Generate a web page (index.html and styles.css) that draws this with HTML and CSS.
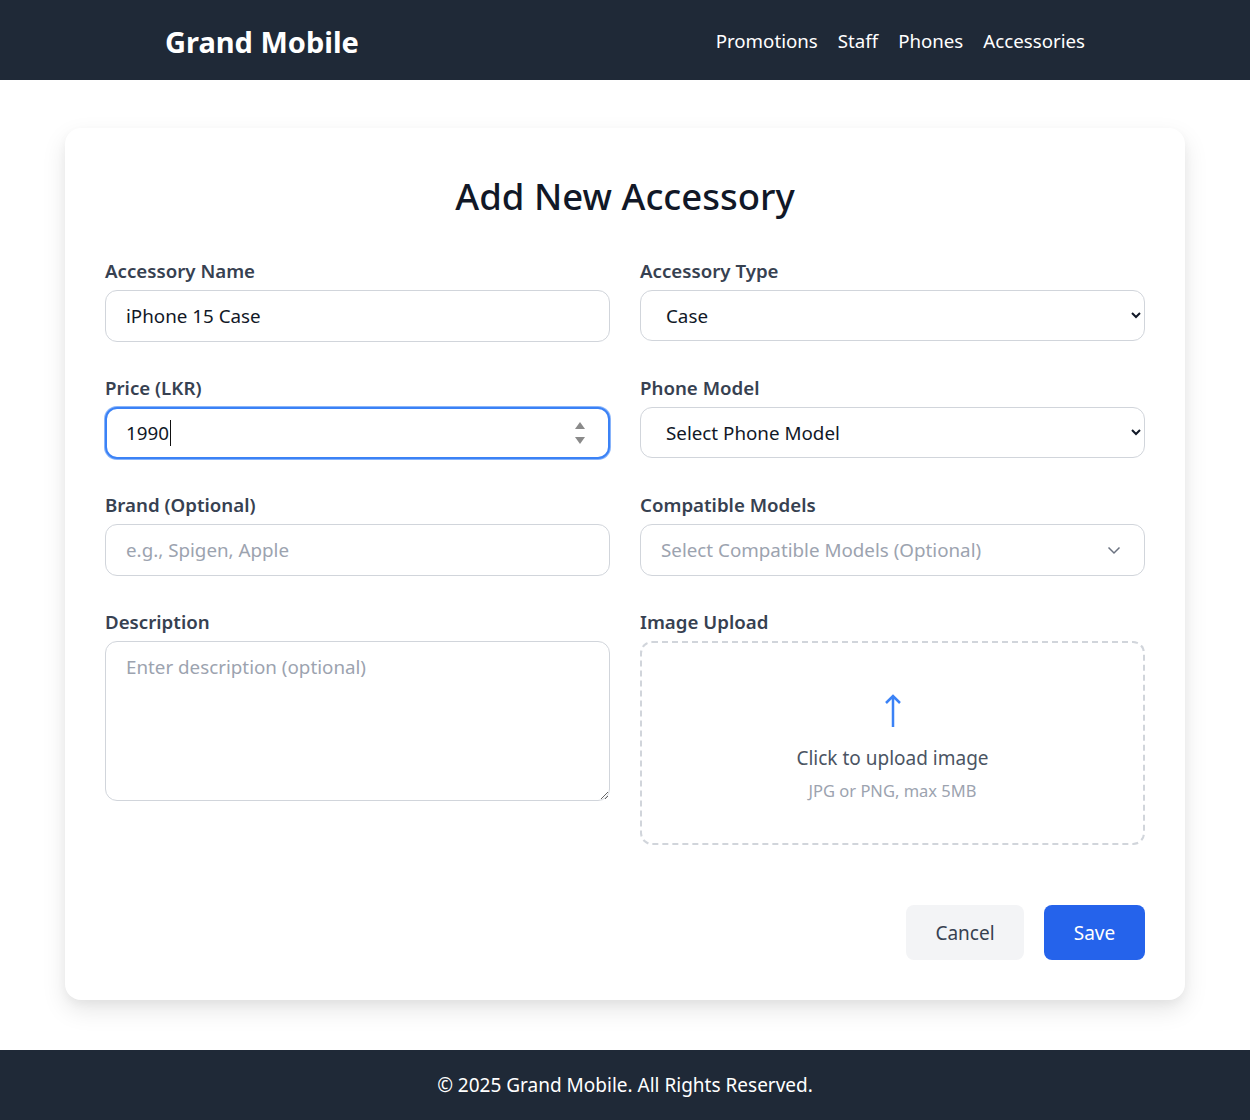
FILE: index.html
```html
<!DOCTYPE html>
<html lang="en">
<head>
    <meta charset="UTF-8">
    <meta name="viewport" content="width=device-width, initial-scale=1.0">
    <title>Add New Accessory - Grand Mobile</title>
    <link rel="stylesheet" href="styles.css">
</head>
<body>
    <!-- Navigation Bar -->
    <nav class="navbar">
        <div class="nav-inner">
            <div class="nav-brand">Grand Mobile</div>
            <ul class="nav-links">
                <li><a href="#">Promotions</a></li>
                <li><a href="#">Staff</a></li>
                <li><a href="#">Phones</a></li>
                <li><a href="#">Accessories</a></li>
            </ul>
        </div>
    </nav>

    <!-- Main Content -->
    <main class="page">
        <form class="form-card">
            <h1 class="form-title">Add New Accessory</h1>

            <div class="form-grid">
                <div class="field">
                    <label for="name">Accessory Name</label>
                    <input type="text" id="name" class="control" value="iPhone 15 Case">
                </div>
                <div class="field">
                    <label for="type">Accessory Type</label>
                    <select id="type" class="control select">
                        <option>Case</option>
                        <option>Charger</option>
                        <option>Screen Protector</option>
                    </select>
                </div>

                <div class="field">
                    <label for="price">Price (LKR)</label>
                    <div class="number-wrap">
                        <input type="text" id="price" class="control focused" value="1990">
                        <span class="caret"></span>
                        <span class="spinner">
                            <svg width="12" height="26" viewBox="0 0 12 26">
                                <path d="M6 2 L11 9 H1 Z" fill="#8a8a8a"/>
                                <path d="M6 24 L11 17 H1 Z" fill="#8a8a8a"/>
                            </svg>
                        </span>
                    </div>
                </div>
                <div class="field">
                    <label for="phone">Phone Model</label>
                    <select id="phone" class="control select">
                        <option>Select Phone Model</option>
                    </select>
                </div>

                <div class="field">
                    <label for="brand">Brand (Optional)</label>
                    <input type="text" id="brand" class="control" placeholder="e.g., Spigen, Apple">
                </div>
                <div class="field">
                    <label>Compatible Models</label>
                    <div class="control multi-select">
                        <span class="placeholder">Select Compatible Models (Optional)</span>
                        <svg width="16" height="16" viewBox="0 0 16 16">
                            <path d="M2.5 5.5 L8 11 L13.5 5.5" fill="none" stroke="#6b7280" stroke-width="1.5"/>
                        </svg>
                    </div>
                </div>

                <div class="field">
                    <label for="desc">Description</label>
                    <textarea id="desc" class="control textarea" placeholder="Enter description (optional)"></textarea>
                </div>
                <div class="field">
                    <label>Image Upload</label>
                    <div class="upload-box">
                        <svg width="20" height="36" viewBox="0 0 20 36">
                            <path d="M10 34 V3 M3 10 L10 3 L17 10" fill="none" stroke="#3b82f6" stroke-width="2.5"/>
                        </svg>
                        <div class="upload-text">Click to upload image</div>
                        <div class="upload-hint">JPG or PNG, max 5MB</div>
                    </div>
                </div>
            </div>

            <div class="form-actions">
                <button type="button" class="btn btn-cancel">Cancel</button>
                <button type="submit" class="btn btn-save">Save</button>
            </div>
        </form>
    </main>

    <footer class="footer">
        &copy; 2025 Grand Mobile. All Rights Reserved.
    </footer>
</body>
</html>
```

FILE: styles.css
```css
/* General Styles */
* {
    box-sizing: border-box;
}

body {
    font-family: 'Noto Sans', 'Open Sans', sans-serif;
    margin: 0;
    background-color: #fff;
    color: #111827;
}

/* Navigation Bar */
.navbar {
    background-color: #1f2937;
    height: 80px;
}

.nav-inner {
    width: 920px;
    height: 100%;
    margin: 0 auto;
    display: flex;
    justify-content: space-between;
    align-items: center;
}

.nav-brand {
    font-size: 29px;
    font-weight: 700;
    color: #fff;
    padding-top: 2px;
}

.nav-links {
    list-style-type: none;
    display: flex;
    gap: 20px;
    padding: 0;
    margin: 0;
}

.nav-links a {
    text-decoration: none;
    color: #fff;
    font-size: 18.7px;
}

/* Main Content */
.page {
    padding: 48px 65px 50px;
}

.form-card {
    background-color: #fff;
    border-radius: 16px;
    padding: 40px;
    box-shadow: 0 10px 25px rgba(0, 0, 0, 0.1), 0 4px 10px rgba(0, 0, 0, 0.04);
}

.form-title {
    font-size: 36.5px;
    font-weight: 500;
    text-align: center;
    margin: 4px 0 39px;
    line-height: 48px;
}

.form-grid {
    display: grid;
    grid-template-columns: 1fr 1fr;
    column-gap: 30px;
    row-gap: 34px;
}

.field label {
    display: block;
    font-size: 18.7px;
    font-weight: 600;
    color: #374151;
    margin-bottom: 7px;
    line-height: 24px;
}

.control {
    width: 100%;
    height: 52px;
    padding: 0 20px;
    border: 1px solid #d1d5db;
    border-radius: 12px;
    font-family: inherit;
    font-size: 18.8px;
    color: #111827;
    background-color: #fff;
    outline: none;
}

.control::placeholder {
    color: #9ca3af;
}

.select {
    height: 51px;
    padding-left: 21px;
    padding-right: 8px;
}

.number-wrap {
    position: relative;
}

.control.focused {
    border: 2px solid #3b82f6;
    box-shadow: 0 0 0 1px rgba(59, 130, 246, 0.6);
    padding-left: 19px;
}

.caret {
    position: absolute;
    left: 65px;
    top: 13px;
    width: 1px;
    height: 26px;
    background-color: #111;
}

.spinner {
    position: absolute;
    right: 24px;
    top: 13px;
    display: flex;
}

.multi-select {
    display: flex;
    justify-content: space-between;
    align-items: center;
    padding-right: 22px;
}

.placeholder {
    color: #9ca3af;
}

.textarea {
    height: 160px;
    padding: 12px 20px;
    resize: vertical;
    display: block;
}

.upload-box {
    height: 204px;
    border: 2px dashed #d1d5db;
    border-radius: 12px;
    display: flex;
    flex-direction: column;
    align-items: center;
    justify-content: center;
    padding-top: 8px;
}

.upload-text {
    font-size: 19px;
    color: #4b5563;
    margin-top: 16px;
}

.upload-hint {
    font-size: 16.5px;
    color: #9ca3af;
    margin-top: 8px;
}

/* Buttons */
.form-actions {
    display: flex;
    justify-content: flex-end;
    gap: 20px;
    margin-top: 60px;
}

.btn {
    height: 55px;
    border: none;
    border-radius: 8px;
    font-family: inherit;
    font-size: 19px;
    cursor: pointer;
}

.btn-cancel {
    width: 118px;
    background-color: #f3f4f6;
    color: #374151;
}

.btn-save {
    width: 101px;
    background-color: #2563eb;
    color: #fff;
}

/* Footer */
.footer {
    background-color: #1f2937;
    color: #fff;
    text-align: center;
    font-size: 19px;
    height: 70px;
    line-height: 70px;
}
```
